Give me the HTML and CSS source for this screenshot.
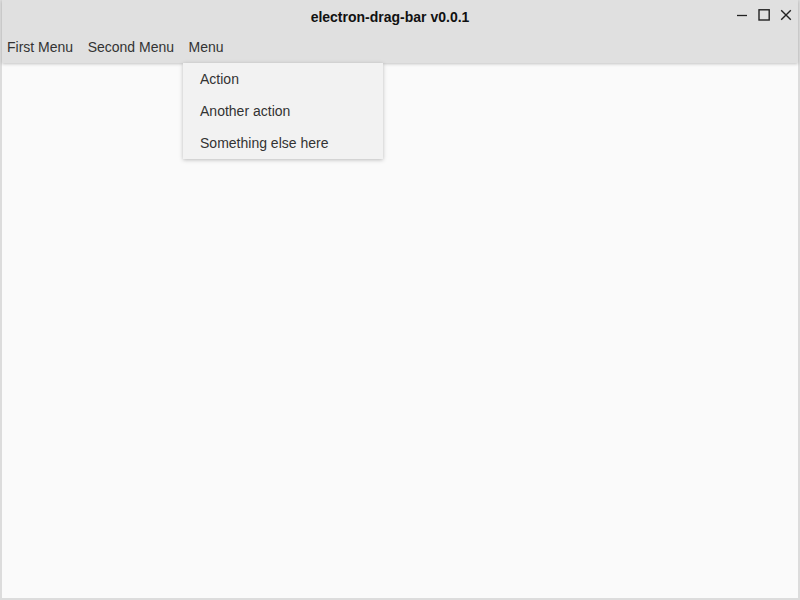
FILE: index.html
```html
<!DOCTYPE html>
<html>
<head>
<meta charset="utf-8">
<link rel="stylesheet" href="styles.css">
</head>
<body>
<div class="window">
  <header class="titlebar">
    <div class="title-row">
      <div class="title">electron-drag-bar v0.0.1</div>
      <div class="controls">
        <button class="ctl" aria-label="minimize"><svg width="12" height="12" viewBox="0 0 12 12"><path d="M1 6.5h10" stroke="#222" stroke-width="1.3" fill="none"/></svg></button>
        <button class="ctl" aria-label="maximize"><svg width="12" height="12" viewBox="0 0 12 12"><rect x="1" y="0.8" width="10.2" height="10.2" stroke="#222" stroke-width="1.4" fill="none"/></svg></button>
        <button class="ctl" aria-label="close"><svg width="12" height="12" viewBox="0 0 12 12"><path d="M1.2 1.2l9.6 9.6M10.8 1.2l-9.6 9.6" stroke="#222" stroke-width="1.4" fill="none"/></svg></button>
      </div>
    </div>
    <nav class="menubar">
      <div class="menu-item">First Menu</div>
      <div class="menu-item">Second Menu</div>
      <div class="menu-item open">Menu
        <ul class="dropdown">
          <li>Action</li>
          <li>Another action</li>
          <li>Something else here</li>
        </ul>
      </div>
    </nav>
  </header>
  <main class="content"></main>
</div>
</body>
</html>
```

FILE: styles.css
```css
* { box-sizing: border-box; }
html, body { margin: 0; padding: 0; height: 100%; }
body {
  font-family: "Liberation Sans", Arial, sans-serif;
  font-size: 14px;
  color: #333;
  background: #fafafa;
}
.window {
  height: 600px;
  border: 2px solid #dcdcdc;
  border-top: none;
  display: flex;
  flex-direction: column;
  background: #fafafa;
}
.titlebar {
  background: #e0e0e0;
  height: 63px;
  box-shadow: 0 1px 3px rgba(0,0,0,0.22);
  position: relative;
  z-index: 2;
  display: flex;
  flex-direction: column;
}
.title-row {
  height: 32px;
  display: flex;
  align-items: center;
  position: relative;
}
.title {
  flex: 1;
  text-align: center;
  font-weight: bold;
  color: #111;
  padding-right: 20px;
  padding-top: 2px;
}
.controls {
  position: absolute;
  right: 6px;
  top: 9px;
  display: flex;
  gap: 10px;
}
.ctl {
  border: none;
  background: none;
  padding: 0;
  width: 12px;
  height: 12px;
  display: flex;
}
.menubar {
  display: flex;
  height: 31px;
  align-items: center;
}
.menu-item {
  padding: 0 7px 0 5px;
  color: #333;
  position: relative;
  line-height: 31px;
}
.menu-item + .menu-item { padding-left: 7.5px; }
.dropdown {
  position: absolute;
  top: 31px;
  left: 2px;
  width: 200px;
  margin: 0;
  padding: 0;
  list-style: none;
  background: #f2f2f2;
  box-shadow: 0 1px 4px rgba(0,0,0,0.25);
}
.dropdown li {
  height: 32px;
  line-height: 32px;
  padding-left: 17px;
  color: #333;
}
.content { flex: 1; }
```
